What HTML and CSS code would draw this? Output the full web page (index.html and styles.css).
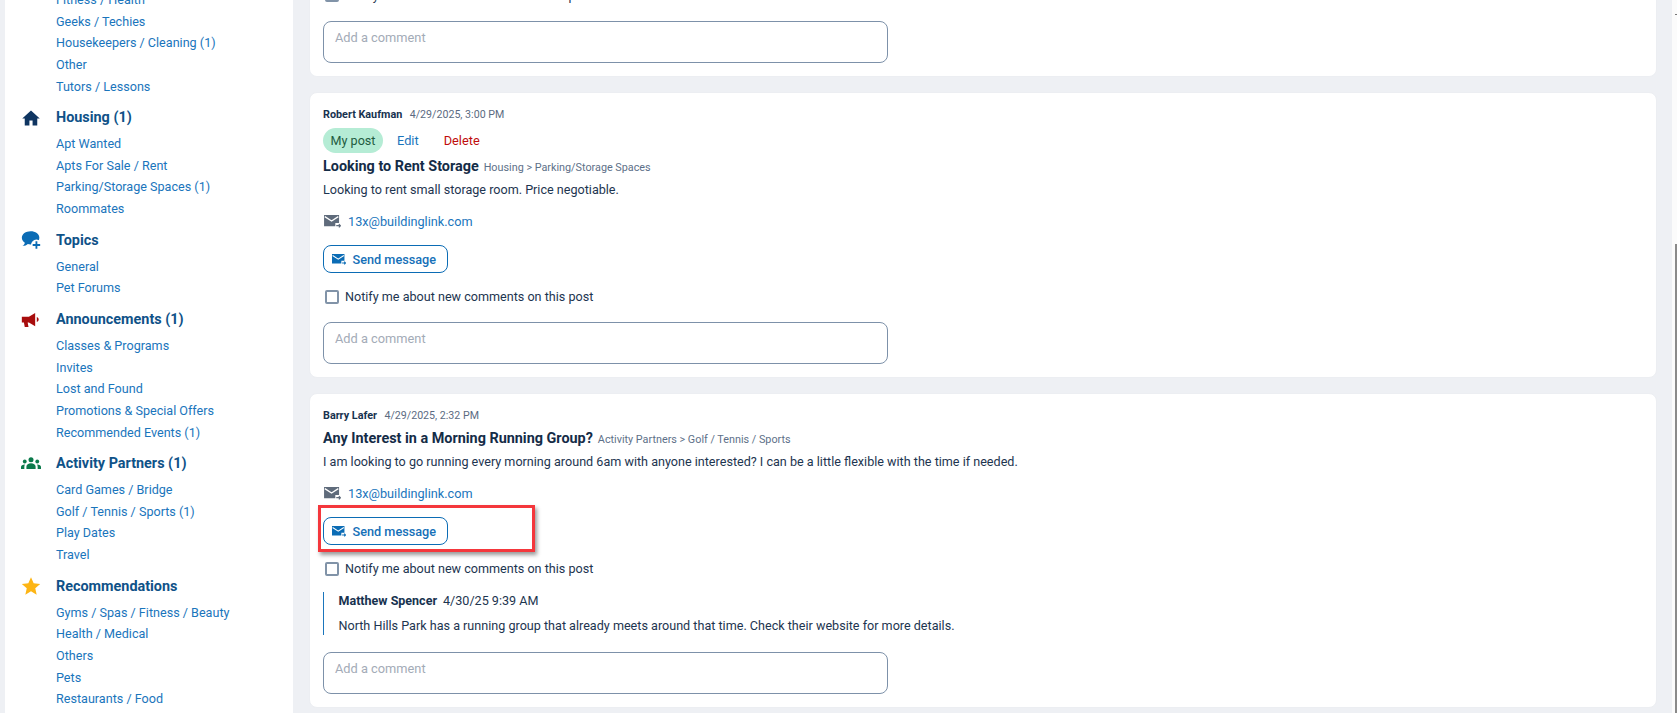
FILE: index.html
```html
<!DOCTYPE html>
<html lang="en">
<head>
<meta charset="utf-8">
<title>Classifieds</title>
<link rel="stylesheet" href="styles.css">
</head>
<body>
<div class="page">
  <nav class="sidebar">
    <ul class="links first">
      <li><a>Fitness / Health</a></li>
      <li><a>Geeks / Techies</a></li>
      <li><a>Housekeepers / Cleaning (1)</a></li>
      <li><a>Other</a></li>
      <li><a>Tutors / Lessons</a></li>
    </ul>
    <div class="head"><svg class="ico" viewBox="0 0 24 24"><path fill="#0f3561" d="M12 3 1.500 12.600h3V21h5.600v-6h3.800v6h5.600v-8.400h3z"/></svg><span>Housing (1)</span></div>
    <ul class="links">
      <li><a>Apt Wanted</a></li>
      <li><a>Apts For Sale / Rent</a></li>
      <li><a>Parking/Storage Spaces (1)</a></li>
      <li><a>Roommates</a></li>
    </ul>
    <div class="head"><svg class="ico" viewBox="0 0 24 24"><path fill="#0b6cb5" d="M11.500 1.500C5.700 1.500 1 4.900 1 9.300c0 2.400 1.400 4.500 3.600 5.900-.3 1.600-1.200 3-2.800 4 2.500.1 4.800-.8 6.400-2.300.9.200 2.100.4 3.300.4 5.800 0 10.500-3.400 10.500-8S17.300 1.500 11.500 1.500z"/><circle cx="18.500" cy="18" r="6.500" fill="#fff"/><path stroke="#0b6cb5" stroke-width="2.200" d="M18.500 13.500v9M14 18h9"/></svg><span>Topics</span></div>
    <ul class="links">
      <li><a>General</a></li>
      <li><a>Pet Forums</a></li>
    </ul>
    <div class="head"><svg class="ico" viewBox="0 0 24 24"><path fill="#a80d0d" d="M1 8h8.500L17 3.500v16L9.500 15H8l1 5.500H4.500l-1-5.500H1z"/><path fill="#a80d0d" d="M19 8.500c1.500.5 2.200 1.800 2.200 3s-.7 2.500-2.200 3z"/></svg><span>Announcements (1)</span></div>
    <ul class="links">
      <li><a>Classes &amp; Programs</a></li>
      <li><a>Invites</a></li>
      <li><a>Lost and Found</a></li>
      <li><a>Promotions &amp; Special Offers</a></li>
      <li><a>Recommended Events (1)</a></li>
    </ul>
    <div class="head"><svg class="ico" viewBox="0 0 24 24"><g fill="#0b7a4b"><circle cx="12" cy="7" r="3"/><circle cx="4.500" cy="9" r="2.300"/><circle cx="19.500" cy="9" r="2.300"/><path d="M6.500 18v-3c0-2.500 2.400-4 5.500-4s5.500 1.500 5.500 4v3zM0 18v-2.500c0-1.700 1.700-3 4.800-3-.5.800-.8 1.700-.8 2.700V18zM24 18v-2.500c0-1.700-1.700-3-4.800-3 .5.800.8 1.700.8 2.700V18z"/></g></svg><span>Activity Partners (1)</span></div>
    <ul class="links">
      <li><a>Card Games / Bridge</a></li>
      <li><a>Golf / Tennis / Sports (1)</a></li>
      <li><a>Play Dates</a></li>
      <li><a>Travel</a></li>
    </ul>
    <div class="head"><svg class="ico" viewBox="0 0 24 24"><path fill="#fdb515" d="m12 1.500 3.200 7.200 7.800.8-5.900 5.200 1.700 7.700L12 18.400l-6.800 4 1.700-7.700L1 9.500l7.800-.8z"/></svg><span>Recommendations</span></div>
    <ul class="links">
      <li><a>Gyms / Spas / Fitness / Beauty</a></li>
      <li><a>Health / Medical</a></li>
      <li><a>Others</a></li>
      <li><a>Pets</a></li>
      <li><a>Restaurants / Food</a></li>
    </ul>
  </nav>

  <main class="feed">
    <article class="card card-top">
      <label class="notify"><span class="box"></span>Notify me about new comments on this post</label>
      <div class="comment">Add a comment</div>
    </article>

    <article class="card card-mine">
      <div class="meta"><b>Robert Kaufman</b><span>4/29/2025, 3:00 PM</span></div>
      <div class="actions"><span class="pill">My post</span><a class="edit">Edit</a><a class="delete">Delete</a></div>
      <div class="title"><h3>Looking to Rent Storage</h3><span>Housing &gt; Parking/Storage Spaces</span></div>
      <p class="body">Looking to rent small storage room. Price negotiable.</p>
      <div class="email"><svg class="mail" viewBox="0 0 18 16"><path fill="#5f6b7b" d="M0 1h16v8.500h-4V13H0z"/><path fill="none" stroke="#fff" stroke-width="1.300" d="M.8 2.800 8 7.500l7.200-4.700"/><path stroke="#5f6b7b" stroke-width="1.300" fill="none" d="M13 12.500h4.500M15.800 10.800l1.700 1.700-1.700 1.700"/></svg><a>13x@buildinglink.com</a></div>
      <button class="send"><svg class="mail-sm" viewBox="0 0 18 16"><path fill="#0b6cb5" d="M0 1h16v8.500h-4V13H0z"/><path fill="none" stroke="#fff" stroke-width="1.300" d="M.8 2.800 8 7.500l7.200-4.700"/><path stroke="#0b6cb5" stroke-width="1.300" fill="none" d="M13 12.500h4.500M15.800 10.800l1.700 1.700-1.700 1.700"/></svg>Send message</button>
      <label class="notify"><span class="box"></span>Notify me about new comments on this post</label>
      <div class="comment">Add a comment</div>
    </article>

    <article class="card card-other">
      <div class="meta"><b>Barry Lafer</b><span>4/29/2025, 2:32 PM</span></div>
      <div class="title"><h3>Any Interest in a Morning Running Group?</h3><span>Activity Partners &gt; Golf / Tennis / Sports</span></div>
      <p class="body">I am looking to go running every morning around 6am with anyone interested? I can be a little flexible with the time if needed.</p>
      <div class="email"><svg class="mail" viewBox="0 0 18 16"><path fill="#5f6b7b" d="M0 1h16v8.500h-4V13H0z"/><path fill="none" stroke="#fff" stroke-width="1.300" d="M.8 2.800 8 7.500l7.200-4.700"/><path stroke="#5f6b7b" stroke-width="1.300" fill="none" d="M13 12.500h4.500M15.800 10.800l1.700 1.700-1.700 1.700"/></svg><a>13x@buildinglink.com</a></div>
      <div class="callout-wrap">
        <button class="send tight"><svg class="mail-sm" viewBox="0 0 18 16"><path fill="#0b6cb5" d="M0 1h16v8.500h-4V13H0z"/><path fill="none" stroke="#fff" stroke-width="1.300" d="M.8 2.800 8 7.500l7.200-4.700"/><path stroke="#0b6cb5" stroke-width="1.300" fill="none" d="M13 12.500h4.500M15.800 10.800l1.700 1.700-1.700 1.700"/></svg>Send message</button>
        <div class="callout"></div>
      </div>
      <label class="notify"><span class="box"></span>Notify me about new comments on this post</label>
      <div class="reply">
        <div class="reply-meta"><b>Matthew Spencer</b><span>4/30/25 9:39 AM</span></div>
        <p>North Hills Park has a running group that already meets around that time. Check their website for more details.</p>
      </div>
      <div class="comment">Add a comment</div>
    </article>
  </main>

  <div class="scrollbar"><div class="arrow"></div><div class="thumb"></div></div>
</div>
</body>
</html>
```

FILE: styles.css
```css
* { box-sizing: border-box; }
html, body { margin: 0; height: 100%; overflow: hidden; }
body { font-family: Roboto, "Liberation Sans", sans-serif; background: #eef0f4; color: #122b47; }
a { cursor: pointer; }

.page { display: flex; height: 713px; overflow: hidden; }

.sidebar { width: 288px; margin-left: 5px; height: 713px; overflow: hidden; background: #fff; flex: none; padding-left: 16px; }
.links { list-style: none; margin: 0; padding: 0 0 0 35px; }
.links.first { margin-top: -11px; }
.links li { height: 21.67px; line-height: 21.67px; font-size: 12.6px; color: #1a75bc; white-space: nowrap; }
.head { display: flex; align-items: center; height: 20px; margin: 10.6px 0 5.3px; font-size: 14.4px; font-weight: 700; color: #0f5288; }
.ico { width: 20px; height: 20px; margin-right: 15px; flex: none; }

.feed { width: 1348px; margin-left: 16px; flex: none; display: flex; flex-direction: column; gap: 15px; }
.card { background: #fff; border: 1px solid #eceef2; border-radius: 8px; padding: 14px 13px 0; flex: none; }
.card-top { height: 77px; border-top: 0; border-top-left-radius: 0; border-top-right-radius: 0; padding-top: 0; }
.card-top .notify { margin-top: -15px; }
.card-top .comment { margin-top: 16px; }
.card-mine { height: 286px; }
.card-other { height: 315px; }

.meta { display: flex; gap: 7.5px; align-items: baseline; font-size: 10.65px; line-height: 16px; color: #5b6b82; }
.meta b { color: #17324f; font-weight: 700; font-size: 10.8px; }
.actions { display: flex; align-items: center; font-size: 12.6px; margin-top: 5px; height: 25px; }
.pill { background: #b5ecd5; color: #1f5c41; border-radius: 13px; width: 60px; height: 25px; line-height: 25px; text-align: center; }
.edit { color: #1a75bc; margin-left: 14px; font-size: 12.8px; }
.delete { color: #c00d0d; margin-left: 25px; font-size: 12.8px; }
.title { display: flex; align-items: baseline; gap: 5px; margin-top: 4px; line-height: 20px; }
.meta + .title { margin-top: 5px; }
.title h3 { margin: 0; font-size: 14.4px; font-weight: 700; color: #142c47; }
.title span { font-size: 10.8px; color: #5d7088; }
.body { margin: 2.5px 0 0; font-size: 12.6px; line-height: 18px; color: #1d3550; }

.email { display: flex; align-items: center; margin-top: 12.5px; height: 20px; font-size: 12.7px; color: #1a75bc; }
.mail { width: 17px; height: 15px; margin: 0 7px 0 1px; }
.send { display: flex; align-items: center; margin-top: 14px; width: 125px; height: 28px; padding: 0 0 0 8px; background: #fff; border: 1px solid #0b6cb5; border-radius: 8px; color: #1570b8; font: 500 12.7px Roboto, sans-serif; }
.send.tight { margin-top: 0; }
.mail-sm { width: 14px; height: 13px; margin-right: 6.5px; }
.callout-wrap { position: relative; margin-top: 14px; }
.callout { position: absolute; left: -5px; top: -12px; width: 217px; height: 47px; border: 3px solid #f4373c; box-shadow: 2px 3px 4px rgba(0,0,0,.4); pointer-events: none; }

.notify { display: flex; align-items: center; margin-top: 13.5px; height: 20px; font-size: 12.6px; color: #1d3550; }
.box { width: 14px; height: 14px; border: 2px solid #8193a8; border-radius: 2px; margin: 0 6px 0 2px; flex: none; }
.comment { margin-top: 15px; width: 565px; height: 42px; border: 1px solid #7d91a9; border-radius: 8px; padding: 7px 11px; font-size: 12.8px; line-height: 17px; color: #a3abb7; }

.reply { margin-top: 13.5px; border-left: 1px solid #1a75bc; padding-left: 14.5px; height: 43px; }
.reply-meta { display: flex; gap: 6px; font-size: 12.6px; line-height: 18px; color: #1d3550; }
.reply-meta b { font-weight: 700; font-size: 12.5px; color: #17324f; }
.reply p { margin: 7px 0 0; font-size: 12.6px; line-height: 18px; color: #1d3550; }
.reply + .comment { margin-top: 17px; }

.scrollbar { position: absolute; top: 0; right: 0; width: 5px; height: 713px; background: #fbfbfb; }
.arrow { position: absolute; top: 14px; left: 3px; width: 2px; height: 1px; background: #777; }
.thumb { position: absolute; top: 244px; bottom: 0; left: 3px; width: 2px; background: #8a8a8a; }
```
